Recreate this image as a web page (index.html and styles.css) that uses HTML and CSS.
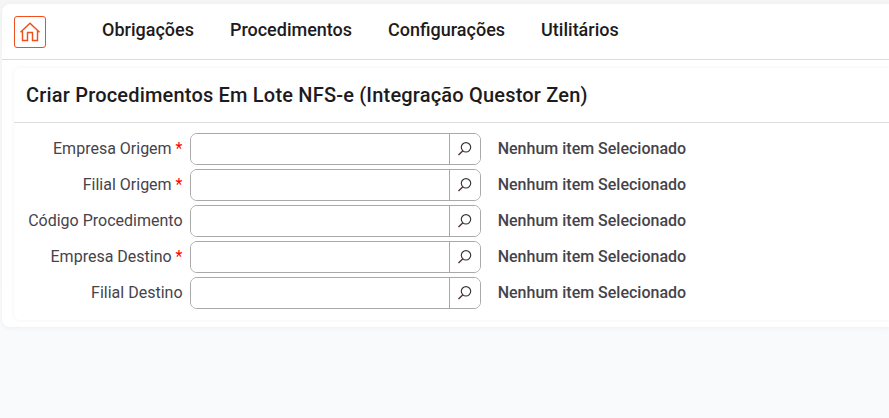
FILE: index.html
```html
<!DOCTYPE html>
<html lang="pt-BR">
<head>
<meta charset="utf-8">
<title>Criar Procedimentos Em Lote</title>
<link rel="stylesheet" href="styles.css">
</head>
<body>
<svg width="0" height="0" class="defs">
  <symbol id="search" viewBox="0 0 16 16"><circle cx="9" cy="6.3" r="4.7" fill="none" stroke="#38343a" stroke-width="1.15"/><path d="M5.9 9.7L1.5 14" fill="none" stroke="#4a302e" stroke-width="1.35"/></symbol>
</svg>
<main class="window">
  <nav class="menu">
    <a class="home" aria-label="Início"><svg width="22" height="22" viewBox="0 0 22 22"><path d="M1.5 11.3L11 2.2l9.5 9.1M3.5 10v9.5h5v-8h5v8h5V10" fill="none" stroke="currentColor" stroke-width="1.45"/></svg></a>
    <div class="links"><a>Obrigações</a><a>Procedimentos</a><a>Configurações</a><a>Utilitários</a></div>
  </nav>
  <section class="panel">
    <h1>Criar Procedimentos Em Lote NFS-e (Integração Questor Zen)</h1>
    <form class="fields">
      <div class="row"><label>Empresa Origem <i>*</i></label><div class="lookup"><input type="text"><button type="button"><svg><use href="#search"/></svg></button></div><strong>Nenhum item Selecionado</strong></div>
      <div class="row"><label>Filial Origem <i>*</i></label><div class="lookup"><input type="text"><button type="button"><svg><use href="#search"/></svg></button></div><strong>Nenhum item Selecionado</strong></div>
      <div class="row"><label>Código Procedimento</label><div class="lookup"><input type="text"><button type="button"><svg><use href="#search"/></svg></button></div><strong>Nenhum item Selecionado</strong></div>
      <div class="row"><label>Empresa Destino <i>*</i></label><div class="lookup"><input type="text"><button type="button"><svg><use href="#search"/></svg></button></div><strong>Nenhum item Selecionado</strong></div>
      <div class="row"><label>Filial Destino</label><div class="lookup"><input type="text"><button type="button"><svg><use href="#search"/></svg></button></div><strong>Nenhum item Selecionado</strong></div>
    </form>
  </section>
</main>
</body>
</html>
```
FILE: styles.css
```css
* { box-sizing: border-box; }
body {
  margin: 0;
  padding: 4px 0 0 2px;
  height: 418px;
  overflow: hidden;
  background: linear-gradient(#f5f5f5 0, #f8f9fa 60px, #f9fafc 330px);
  font-family: Roboto, sans-serif;
  font-size: 16px;
  color: #46434a;
}
.defs { display: none; }
.window {
  height: 323px;
  background: #fff;
  border-radius: 8px 0 0 8px;
  box-shadow: 0 1px 5px rgba(0, 0, 0, .05);
}
.menu {
  display: flex;
  align-items: center;
  height: 56px;
  padding-left: 12px;
  border-bottom: 1px solid #dcdcdc;
}
.home {
  display: flex;
  align-items: center;
  justify-content: center;
  width: 32px;
  height: 32px;
  border: 1px solid #f04e1d;
  border-radius: 3px;
  color: #f04e1d;
}
.links {
  display: flex;
  gap: 36px;
  margin: -4px 0 0 56px;
  font-size: 18px;
  font-weight: 500;
  line-height: 24px;
  color: #1d1b20;
}
.panel {
  height: 252px;
  margin: 8px 0 0 12px;
  border-radius: 6px 0 0 6px;
  box-shadow: 0 0 4px rgba(0, 0, 0, .06);
}
h1 {
  height: 55px;
  margin: 0;
  padding-left: 12px;
  border-bottom: 1px solid #dedede;
  font-size: 20px;
  font-weight: 500;
  letter-spacing: .19px;
  line-height: 54px;
  color: #1d1b20;
}
.fields {
  display: flex;
  flex-direction: column;
  gap: 4px;
  padding-top: 10px;
}
.row { display: flex; align-items: center; height: 32px; }
label { width: 168.5px; text-align: right; line-height: 30px; margin-top: -1px; }
label i { color: #f00; font-style: normal; }
.lookup {
  display: flex;
  width: 291px;
  height: 32px;
  margin-left: 7.5px;
  border: 1px solid #a9a9a9;
  border-radius: 7px;
  overflow: hidden;
}
input { width: 258px; padding: 0 8px; border: 0; outline: 0; background: #fff; font: inherit; }
button {
  display: flex;
  align-items: center;
  justify-content: center;
  flex: 1;
  padding: 0;
  border: 0;
  border-left: 1px solid #a9a9a9;
  background: #fff;
}
button svg { width: 16px; height: 16px; }
strong { margin: -1px 0 0 16.7px; font-weight: 500; line-height: 30px; }
```
